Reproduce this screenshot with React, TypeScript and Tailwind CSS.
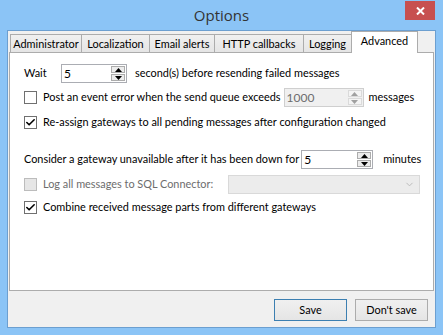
import { Check, ChevronDown } from 'lucide-react';

const font = { fontFamily: 'Lato, "Liberation Sans", Arial, sans-serif' };

function CheckBox({ checked, disabled }: { checked?: boolean; disabled?: boolean }) {
  return (
    <div
      className={`w-[13px] h-[13px] shrink-0 border flex items-center justify-center ${
        disabled ? 'bg-[#e6e6e6] border-[#bcbcbc]' : 'bg-white border-[#707070]'
      }`}
    >
      {checked && <Check className="w-[11px] h-[11px] text-black" strokeWidth={3.5} />}
    </div>
  );
}

function Spin({ value, width, disabled }: { value: string; width: string; disabled?: boolean }) {
  return (
    <div
      className={`${width} h-[19px] shrink-0 flex items-stretch border ${
        disabled ? 'bg-[#f0f0f0] border-[#cfcfcf] text-[#6d6d6d]' : 'bg-white border-[#abadb3] text-black'
      }`}
    >
      <div className="flex-1 pl-[2px] leading-[17px] text-[12px]">{value}</div>
      <div className="w-[15px] flex flex-col py-[1px] pr-[1px] gap-[1px]">
        {[0, 1].map((i) => (
          <div
            key={i}
            className={`flex-1 flex items-center justify-center border ${
              disabled ? 'border-[#dadada] bg-[#f4f4f4]' : 'border-[#acacac] bg-[#ececec]'
            }`}
          >
            <svg width="7" height="4" viewBox="0 0 7 4">
              <path
                d={i === 0 ? 'M0 4 L3.5 0 L7 4 Z' : 'M0 0 L3.5 4 L7 0 Z'}
                fill={disabled ? '#a0a0a0' : '#000'}
              />
            </svg>
          </div>
        ))}
      </div>
    </div>
  );
}

const tabs = [
  { label: 'Administrator', w: 'w-[72px]' },
  { label: 'Localization', w: 'w-[69px]' },
  { label: 'Email alerts', w: 'w-[66px]' },
  { label: 'HTTP callbacks', w: 'w-[90px]' },
  { label: 'Logging', w: 'w-[49px]' },
];

export default function App() {
  return (
    <div className="w-[443px] h-[335px] bg-[#8bc4f6] flex flex-col text-[10.9px] text-black whitespace-nowrap" style={font}>
      {/* Title bar */}
      <div className="h-[30px] relative flex items-center justify-center shrink-0">
        <span className="text-[15px] text-[#333] pt-[1px]" style={{ fontFamily: '"Open Sans", sans-serif' }}>
          Options
        </span>
        <div className="absolute right-[8px] top-[1px] w-[30px] h-[19px] bg-[#c75050] flex items-center justify-center">
          <svg width="9" height="8" viewBox="0 0 9 8">
            <path d="M1 0.5 L8 7.5 M8 0.5 L1 7.5" stroke="white" strokeWidth="2" />
          </svg>
        </div>
      </div>

      {/* Client */}
      <div className="flex-1 mx-[7px] mb-[7px] border border-[#6c9fd0] bg-[#f0f0f0] flex flex-col">
        <div className="px-[1px] flex flex-col">
          <div className="flex items-end h-[21px] pl-[1px]">
            {tabs.map((t) => (
              <div
                key={t.label}
                className={`${t.w} h-[18px] mr-[-1px] text-center border-t border-l border-r border-[#acacac] bg-gradient-to-b from-[#f0f0f0] to-[#e5e5e5] leading-[17px]`}
              >
                {t.label}
              </div>
            ))}
            <div className="w-[67px] h-[22px] -mb-[1px] relative z-10 text-center bg-white border-t border-l border-r border-[#acacac] leading-[18px]">
              Advanced
            </div>
          </div>
          <div className="h-[239px] bg-white border border-[#acacac] pl-[14px] pr-[8px] flex flex-col">
            <div className="flex items-center mt-[11px] h-[19px]">
              <span className="w-[37px]">Wait</span>
              <Spin value="5" width="w-[66px]" />
              <span className="ml-[8px]">second(s) before resending failed messages</span>
            </div>
            <div className="flex items-center mt-[5px] h-[19px]">
              <CheckBox />
              <span className="ml-[6px]">Post an event error when the send queue exceeds</span>
              <div className="ml-[3px]">
                <Spin value="1000" width="w-[80px]" disabled />
              </div>
              <span className="ml-[5px]">messages</span>
            </div>
            <div className="flex items-center mt-[7px] h-[16px]">
              <CheckBox checked />
              <span className="ml-[6px]">Re-assign gateways to all pending messages after configuration changed</span>
            </div>
            <div className="flex items-center mt-[20px] h-[19px]">
              <span>Consider a gateway unavailable after it has been down for</span>
              <div className="ml-[2px]">
                <Spin value="5" width="w-[72px]" />
              </div>
              <span className="ml-[10px]">minutes</span>
            </div>
            <div className="flex items-center mt-[6px] h-[19px]">
              <CheckBox disabled />
              <span className="ml-[6px] text-[#6d6d6d] w-[183px]">Log all messages to SQL Connector:</span>
              <div className="flex-1 h-[19px] ml-[2px] mr-[5px] border border-[#d9d9d9] bg-[#ececec] flex items-center justify-end pr-[4px]">
                <ChevronDown className="w-[11px] h-[11px] text-[#b8b8b8]" strokeWidth={2} />
              </div>
            </div>
            <div className="flex items-center mt-[5px] h-[16px]">
              <CheckBox checked />
              <span className="ml-[6px]">Combine received message parts from different gateways</span>
            </div>
          </div>
        </div>
        <div className="flex justify-end gap-[8px] mt-[8px] pr-[7px]">
          <button className="w-[73px] h-[22px] border border-[#3c7fb1] bg-gradient-to-b from-[#f0f0f0] to-[#e5e5e5]">
            Save
          </button>
          <button className="w-[73px] h-[22px] border border-[#acacac] bg-gradient-to-b from-[#f0f0f0] to-[#e5e5e5]">
            Don't save
          </button>
        </div>
      </div>
    </div>
  );
}
